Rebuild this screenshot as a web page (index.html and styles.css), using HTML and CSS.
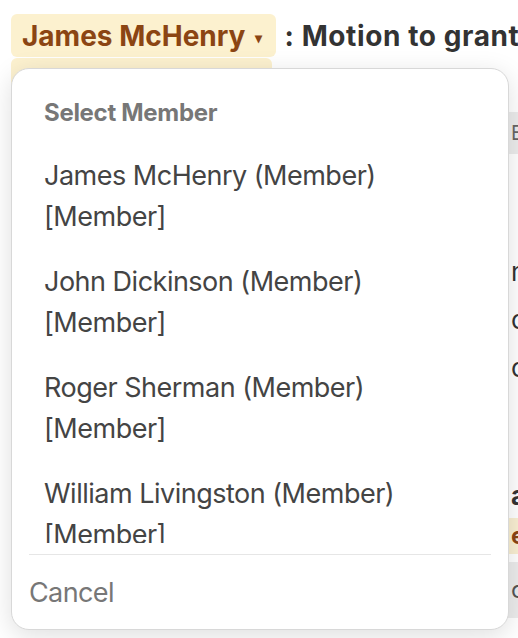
FILE: index.html
```html
<!DOCTYPE html>
<html lang="en">
<head>
<meta charset="utf-8">
<title>Select Member</title>
<link rel="stylesheet" href="styles.css">
</head>
<body>
<div class="page">
  <div class="heading">
    <span class="pill">James McHenry <span class="caret">▾</span></span>
    <span class="title">: Motion to grant leave</span>
  </div>
  <div class="under">
    <div class="pill-shadow"></div>
    <div class="side">
      <div class="band grey-band">Entry</div>
      <div class="frag f-n">nation</div>
      <div class="frag f-o1">of</div>
      <div class="frag f-o2">on</div>
      <div class="frag bold f-a">agenda</div>
      <div class="band yellow-band">etc</div>
      <div class="band grey-band2">con</div>
    </div>
  </div>

  <div class="menu">
    <div class="menu-list">
      <div class="menu-header">Select Member</div>
      <div class="menu-item">James McHenry (Member)<br>[Member]</div>
      <div class="menu-item">John Dickinson (Member)<br>[Member]</div>
      <div class="menu-item">Roger Sherman (Member)<br>[Member]</div>
      <div class="menu-item">William Livingston (Member)<br>[Member]</div>
    </div>
    <div class="menu-footer">
      <div class="cancel">Cancel</div>
    </div>
  </div>
</div>
</body>
</html>
```

FILE: styles.css
```css
* { box-sizing: border-box; }
html, body { margin: 0; padding: 0; }
body {
  background: #ffffff;
  font-family: Inter, "Noto Sans", sans-serif;
  width: 518px;
  height: 638px;
  overflow: hidden;
}
.page {
  position: relative;
  padding: 14px 0 0 11px;
  height: 638px;
  overflow: hidden;
}
.heading {
  display: flex;
  align-items: center;
  gap: 8px;
  white-space: nowrap;
  overflow: hidden;
}
.pill {
  display: inline-flex;
  align-items: center;
  height: 43px;
  padding: 0 14px 0 11px;
  background: #fcf1cf;
  border-radius: 6px;
  color: #8b4513;
  font-weight: 700;
  font-size: 28px;
  letter-spacing: 0;
  flex: none;
}
.caret {
  font-size: 14px;
  margin-left: 10px;
  margin-top: 4px;
}
.title {
  color: #333333;
  font-weight: 700;
  font-size: 28px;
  letter-spacing: 0.6px;
}
.under {
  display: grid;
  grid-template-columns: 499px 1fr;
  margin-left: -11px;
}
.pill-shadow {
  margin: 1px 0 0 11px;
  width: 261px;
  height: 60px;
  background: #fcf1cf;
  border-radius: 6px;
}
.side {
  display: flex;
  flex-direction: column;
  white-space: nowrap;
  overflow: hidden;
  padding-top: 55px;
}
.band {
  padding-left: 12px;
}
.grey-band {
  background: #ececec;
  height: 42px;
  line-height: 42px;
  color: #666;
  font-size: 20px;
}
.frag {
  padding-left: 12px;
  color: #333;
  font-size: 26px;
  line-height: 44px;
}
.f-n { margin-top: 96px; }
.f-o1 { margin-top: 4px; }
.f-o2 { margin-top: 4px; }
.f-a { margin-top: 84px; }
.bold { font-weight: 700; }
.yellow-band {
  background: #f9efd2;
  color: #8b4513;
  font-weight: 700;
  font-size: 24px;
  height: 36px;
  line-height: 36px;
}
.grey-band2 {
  margin-top: 8px;
  background: #ececec;
  color: #555;
  font-size: 24px;
  height: 56px;
  line-height: 56px;
}

.menu {
  position: absolute;
  top: 68px;
  left: 11px;
  width: 498px;
  height: 562px;
  background: #ffffff;
  border: 1.5px solid #d8d8d8;
  border-radius: 18px;
  box-shadow: 0 6px 26px rgba(0, 0, 0, 0.13);
  display: flex;
  flex-direction: column;
  overflow: hidden;
}
.menu-list {
  flex: 1;
  overflow: hidden;
  padding: 0 17px;
  margin-bottom: 11px;
  min-height: 0;
}
.menu-header {
  padding: 24px 15px 10px;
  font-size: 24px;
  line-height: 40px;
  font-weight: 700;
  color: #777777;
  letter-spacing: -0.3px;
}
.menu-item {
  padding: 12px 15px;
  font-size: 27px;
  line-height: 41px;
  color: #444444;
  letter-spacing: -0.5px;
}
.menu-footer {
  margin: 0 17px;
  border-top: 1.5px solid #e6e6e6;
  padding: 17px 0 16px 0;
  flex: none;
}
.cancel {
  font-size: 27px;
  line-height: 41px;
  color: #777777;
  letter-spacing: -0.6px;
}
```
